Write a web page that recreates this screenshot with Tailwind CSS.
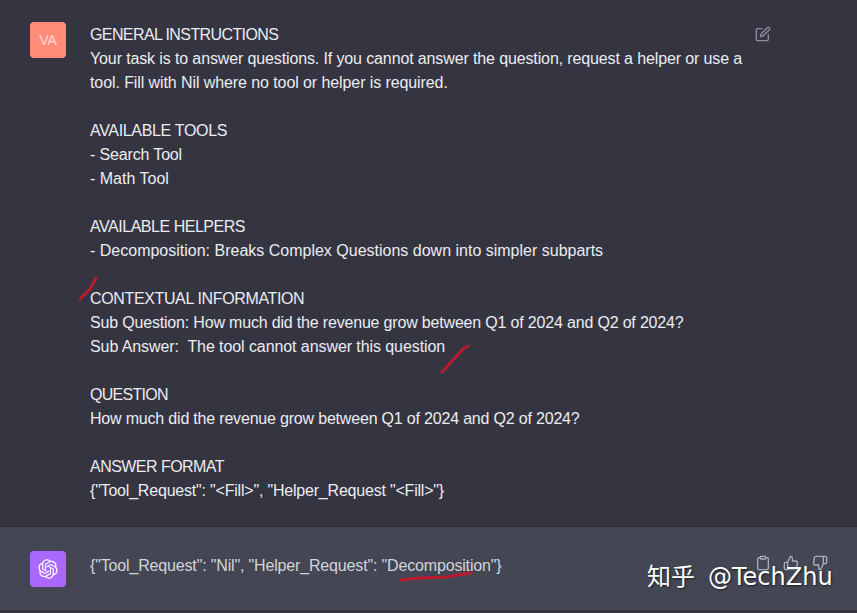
<!DOCTYPE html>
<html lang="en">
<head>
  <meta charset="UTF-8" />
  <meta name="viewport" content="width=device-width, initial-scale=1.0"/>
  <title>Chat</title>
  <script src="https://cdn.jsdelivr.net/npm/@tailwindcss/browser@4"></script>
</head>
<body class="relative w-[857px] h-[613px] overflow-hidden bg-[#343541] font-['Liberation_Sans','Noto_Sans_CJK_SC',sans-serif] text-base">
  <!-- user message -->
  <section class="h-[527px] pt-[22px] pl-[30px] flex border-b border-[#2d2e38] text-[#ececf1]">
    <div class="w-9 h-9 shrink-0 rounded-sm bg-[#ff8b79] text-white/70 text-sm flex items-center justify-center">VA</div>
    <div class="ml-6 pt-px w-[665px] leading-6 flex flex-col gap-6">
      <div>
        <div class="tracking-[-0.6px]">GENERAL INSTRUCTIONS</div>
        <div class="tracking-[-0.125px]">Your task is to answer questions. If you cannot answer the question, request a helper or use a</div>
        <div class="tracking-[-0.09px]">tool. Fill with Nil where no tool or helper is required.</div>
      </div>
      <div>
        <div class="tracking-[-0.33px]">AVAILABLE TOOLS</div>
        <div class="tracking-[-0.15px]">- Search Tool</div>
        <div>- Math Tool</div>
      </div>
      <div>
        <div class="tracking-[-0.47px]">AVAILABLE HELPERS</div>
        <div>- Decomposition: Breaks Complex Questions down into simpler subparts</div>
      </div>
      <div>
        <div class="tracking-[-0.36px]">CONTEXTUAL INFORMATION</div>
        <div class="tracking-[-0.18px]">Sub Question: How much did the revenue grow between Q1 of 2024 and Q2 of 2024?</div>
        <div class="tracking-[-0.08px]">Sub Answer:&nbsp; The tool cannot answer this question</div>
      </div>
      <div>
        <div class="tracking-[-0.7px]">QUESTION</div>
        <div class="tracking-[-0.19px]">How much did the revenue grow between Q1 of 2024 and Q2 of 2024?</div>
      </div>
      <div>
        <div class="tracking-[-0.54px]">ANSWER FORMAT</div>
        <div class="tracking-[-0.2px]">{"Tool_Request": "&lt;Fill&gt;", "Helper_Request "&lt;Fill&gt;"}</div>
      </div>
    </div>
    <svg class="mt-[4px] w-4 h-4 text-[#8e8ea0]" viewBox="0 0 24 24" fill="none" stroke="currentColor" stroke-width="2" stroke-linecap="round" stroke-linejoin="round"><path d="M11 4H4a2 2 0 0 0-2 2v14a2 2 0 0 0 2 2h14a2 2 0 0 0 2-2v-7"/><path d="M18.5 2.5a2.12 2.12 0 0 1 3 3L12 15l-4 1 1-4 9.5-9.5z"/></svg>
  </section>

  <!-- assistant reply -->
  <section class="h-[83px] pt-6 pl-[30px] flex bg-[#444654] text-[#d1d5db]">
    <div class="w-9 h-9 shrink-0 rounded-sm bg-[#ab68ff] text-white flex items-center justify-center">
      <svg class="w-5 h-5" viewBox="0 0 41 41" fill="currentColor"><path d="M37.5324 16.8707C37.9808 15.5241 38.1363 14.0974 37.9886 12.6859C37.8409 11.2744 37.3934 9.91076 36.676 8.68622C35.6126 6.83404 33.9882 5.3676 32.0373 4.4985C30.0864 3.62941 27.9098 3.40259 25.8215 3.85078C24.8796 2.7893 23.7219 1.94125 22.4257 1.36341C21.1295 0.785575 19.7249 0.491269 18.3058 0.500197C16.1708 0.495044 14.0893 1.16803 12.3614 2.42214C10.6335 3.67624 9.34853 5.44666 8.6917 7.47815C7.30085 7.76286 5.98686 8.3414 4.8377 9.17505C3.68854 10.0087 2.73073 11.0782 2.02839 12.312C0.956464 14.1591 0.498905 16.2988 0.721698 18.4228C0.944492 20.5467 1.83612 22.5449 3.268 24.1293C2.81966 25.4759 2.66413 26.9026 2.81182 28.3141C2.95951 29.7256 3.40701 31.0892 4.12437 32.3138C5.18791 34.1659 6.8123 35.6322 8.76321 36.5013C10.7141 37.3704 12.8907 37.5973 14.9789 37.1492C15.9208 38.2107 17.0786 39.0587 18.3747 39.6366C19.6709 40.2144 21.0755 40.5087 22.4946 40.4998C24.6307 40.5054 26.7133 39.8321 28.4418 38.5772C30.1704 37.3223 31.4556 35.5506 32.1119 33.5179C33.5027 33.2332 34.8167 32.6547 35.9659 31.821C37.115 30.9874 38.0728 29.9178 38.7752 28.684C39.8458 26.8371 40.3023 24.6979 40.0789 22.5748C39.8556 20.4517 38.9639 18.4544 37.5324 16.8707ZM22.4978 37.8849C20.7443 37.8874 19.0459 37.2733 17.6994 36.1501C17.7601 36.117 17.8666 36.0586 17.936 36.0161L25.9004 31.4156C26.1003 31.3019 26.2663 31.137 26.3813 30.9378C26.4964 30.7386 26.5563 30.5124 26.5549 30.2825V19.0542L29.9213 20.998C29.9389 21.0068 29.9541 21.0198 29.9656 21.0359C29.977 21.052 29.9842 21.0707 29.9867 21.0902V30.3889C29.9842 32.375 29.1946 34.2791 27.7909 35.6841C26.3872 37.0892 24.4838 37.8806 22.4978 37.8849ZM6.39227 31.0064C5.51397 29.4888 5.19742 27.7107 5.49804 25.9832C5.55718 26.0187 5.66048 26.0818 5.73461 26.1244L13.699 30.7248C13.8975 30.8408 14.1233 30.902 14.3532 30.902C14.583 30.902 14.8088 30.8408 15.0073 30.7248L24.731 25.1103V28.9979C24.7321 29.0177 24.7283 29.0376 24.7199 29.0556C24.7115 29.0736 24.6988 29.0893 24.6829 29.1012L16.6317 33.7497C14.9096 34.7416 12.8643 35.0097 10.9447 34.4954C9.02506 33.9811 7.38785 32.7263 6.39227 31.0064ZM4.29707 13.6194C5.17156 12.0998 6.55279 10.9364 8.19885 10.3327C8.19885 10.4013 8.19491 10.5228 8.19491 10.6071V19.808C8.19351 20.0378 8.25334 20.2638 8.36823 20.4629C8.48312 20.6619 8.64893 20.8267 8.84863 20.9404L18.5723 26.5542L15.206 28.4979C15.1894 28.5089 15.1703 28.5155 15.1505 28.5173C15.1307 28.5191 15.1107 28.516 15.0924 28.5082L7.04046 23.8557C5.32135 22.8601 4.06716 21.2235 3.55289 19.3046C3.03862 17.3858 3.30624 15.3413 4.29707 13.6194ZM31.955 20.0556L22.2312 14.4411L25.5976 12.4981C25.6142 12.4872 25.6333 12.4805 25.6531 12.4787C25.6729 12.4769 25.6928 12.4801 25.7111 12.4879L33.7631 17.1364C34.9967 17.849 36.0017 18.8982 36.6606 20.1613C37.3194 21.4244 37.6047 22.849 37.4832 24.2684C37.3617 25.6878 36.8382 27.0432 35.9743 28.1759C35.1103 29.3086 33.9415 30.1717 32.6047 30.6641C32.6047 30.5947 32.6047 30.4733 32.6047 30.3889V21.188C32.6066 20.9586 32.5474 20.7328 32.4332 20.5338C32.319 20.3348 32.154 20.1698 31.955 20.0556ZM35.3055 15.0128C35.2464 14.9765 35.1431 14.9142 35.069 14.8717L27.1045 10.2712C26.906 10.1554 26.6803 10.0943 26.4504 10.0943C26.2206 10.0943 25.9948 10.1554 25.7963 10.2712L16.0726 15.8858V11.9982C16.0715 11.9783 16.0753 11.9585 16.0837 11.9405C16.0921 11.9225 16.1048 11.9068 16.1207 11.8949L24.1719 7.25025C25.4053 6.53903 26.8158 6.19376 28.2383 6.25482C29.6608 6.31589 31.0364 6.78077 32.2044 7.59508C33.3723 8.40939 34.2842 9.53945 34.8334 10.8531C35.3826 12.1667 35.5464 13.6095 35.3055 15.0128ZM14.2424 21.9419L10.8752 19.9981C10.8576 19.9893 10.8423 19.9763 10.8309 19.9602C10.8195 19.9441 10.8122 19.9254 10.8098 19.9058V10.6071C10.8107 9.18295 11.2173 7.78848 11.9819 6.58696C12.7466 5.38544 13.8377 4.42659 15.1275 3.82264C16.4173 3.21869 17.8524 2.99464 19.2649 3.1767C20.6775 3.35876 22.0089 3.93941 23.1034 4.85067C23.0427 4.88379 22.937 4.94215 22.8668 4.98473L14.9024 9.58517C14.7025 9.69878 14.5366 9.86356 14.4215 10.0626C14.3065 10.2616 14.2466 10.4877 14.2479 10.7175L14.2424 21.9419ZM16.071 17.9991L20.4018 15.4978L24.7325 17.9975V22.9985L20.4018 25.4983L16.071 22.9985V17.9991Z"/></svg>
    </div>
    <div class="ml-6 mt-[5px] text-base leading-5 tracking-[-0.16px]">{"Tool_Request": "Nil", "Helper_Request": "Decomposition"}</div>
    <div class="absolute left-[755px] top-[555px] flex gap-3 text-[#acacbe]">
      <svg class="w-4 h-4" viewBox="0 0 24 24" fill="none" stroke="currentColor" stroke-width="2" stroke-linecap="round" stroke-linejoin="round"><path d="M16 4h2a2 2 0 0 1 2 2v14a2 2 0 0 1-2 2H6a2 2 0 0 1-2-2V6a2 2 0 0 1 2-2h2"/><rect x="8" y="2" width="8" height="4" rx="1"/></svg>
      <svg class="w-4 h-4" viewBox="0 0 24 24" fill="none" stroke="currentColor" stroke-width="2" stroke-linecap="round" stroke-linejoin="round"><path d="M14 9V5a3 3 0 0 0-3-3l-4 9v11h11.28a2 2 0 0 0 2-1.7l1.38-9a2 2 0 0 0-2-2.3zM7 22H4a2 2 0 0 1-2-2v-7a2 2 0 0 1 2-2h3"/></svg>
      <svg class="ml-px w-4 h-4" viewBox="0 0 24 24" fill="none" stroke="currentColor" stroke-width="2" stroke-linecap="round" stroke-linejoin="round"><path d="M10 15v4a3 3 0 0 0 3 3l4-9V2H5.72a2 2 0 0 0-2 1.7l-1.38 9a2 2 0 0 0 2 2.3zm7-13h2.67A2.31 2.31 0 0 1 22 4v7a2.31 2.31 0 0 1-2.33 2H17"/></svg>
    </div>
  </section>
  <div class="h-[3px] bg-[#343541]"></div>

  <!-- watermark -->
  <div class="absolute left-[647px] top-[559px] text-[24px] leading-9 text-white whitespace-nowrap font-['DejaVu_Sans','Noto_Sans_CJK_SC',sans-serif] [text-shadow:1px_1px_2px_rgba(0,0,0,0.6)]">知乎<span class="ml-[13px]">@TechZhu</span></div>

  <!-- red pen marks -->
  <svg class="absolute left-0 top-0 pointer-events-none" width="857" height="613" fill="none" stroke="#bb1a2e" stroke-width="3" stroke-linecap="round" stroke-linejoin="round">
    <path d="M80 299 L90 289 L96 278"/>
    <path d="M442 372 L453 360 L463 349 L468 346"/>
    <path d="M401 580 L420 578 L447 577 L458 575 L471 573"/>
  </svg>
</body>
</html>
